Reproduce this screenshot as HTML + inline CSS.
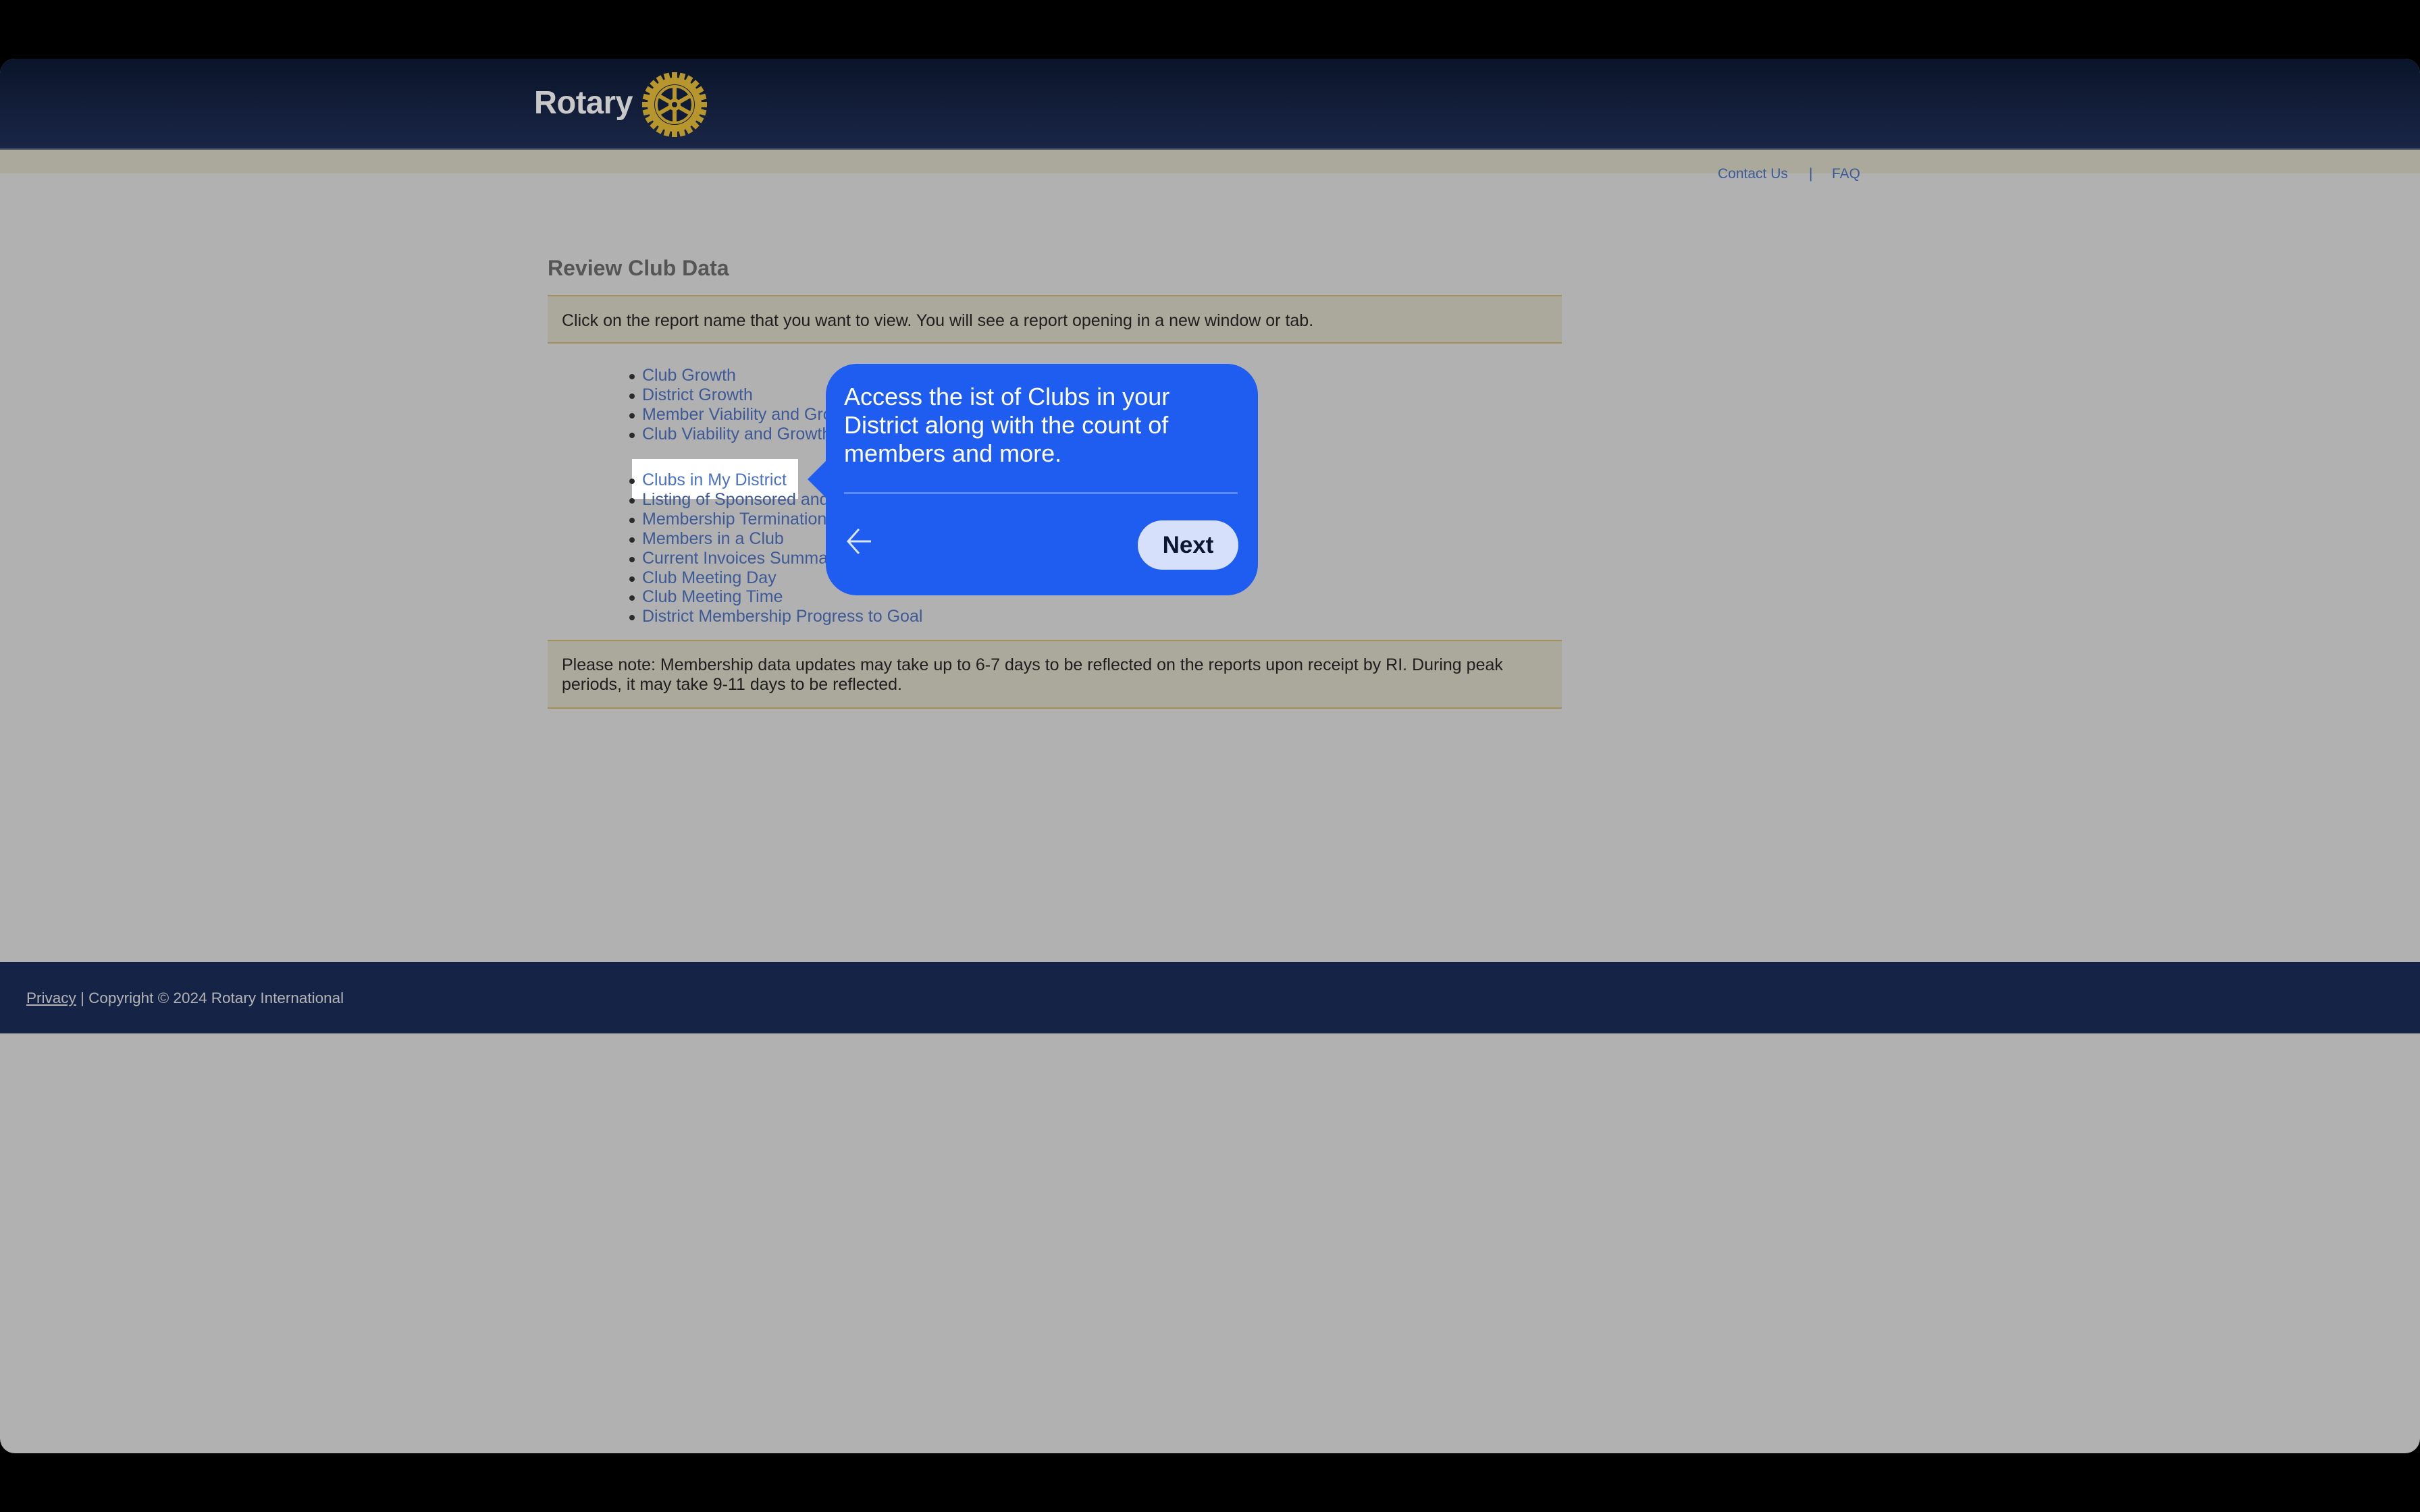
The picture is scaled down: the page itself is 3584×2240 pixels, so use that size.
<!DOCTYPE html>
<html><head><meta charset="utf-8"><style>
*{margin:0;padding:0;box-sizing:border-box}
body{width:3584px;height:2240px;background:#000;position:relative;overflow:hidden;font-family:"Liberation Sans",Arial,sans-serif}
.frame{position:absolute;left:0;top:87px;width:3584px;height:2066px;background:#b1b1b1;border-radius:22px;overflow:hidden}
.hdr{position:absolute;left:0;top:0;width:100%;height:135px;background:linear-gradient(#0a1429,#1a2647);border-bottom:2px solid #5a6070}
.tan{position:absolute;left:0;top:135px;width:100%;height:35px;background:#aaa99b}
.abs{position:absolute}
.lnk{color:#3d5a96}
.list{position:absolute;left:951px;font-size:25px;line-height:28.9px;color:#3d5a96}
.list div{position:relative;white-space:nowrap}
.list div:before{content:"";position:absolute;left:-19px;top:12px;width:8px;height:8px;border-radius:50%;background:#2a2a2a}
.box{position:absolute;left:811px;width:1502px;background:#aaa99b;border-top:2px solid #a38f5a;border-bottom:2px solid #a38f5a;font-size:25px;color:#1e1e1e}
</style></head><body>
<div class="frame">
<div class="hdr"></div>
<div class="tan"></div>
<div class="abs" style="left:791px;top:38px;font-size:48px;font-weight:bold;color:#c8c8c8;letter-spacing:-0.5px;transform:scaleX(0.98);transform-origin:left">Rotary</div>
<svg class="abs" style="left:951px;top:20px" width="96" height="96" viewBox="-48 -48 96 96">
<g fill="#b8962e">
<circle r="40"/>
<g id="t"><rect x="-4" y="-48" width="8" height="10"/></g>
<use href="#t" transform="rotate(15)"/><use href="#t" transform="rotate(30)"/><use href="#t" transform="rotate(45)"/><use href="#t" transform="rotate(60)"/><use href="#t" transform="rotate(75)"/><use href="#t" transform="rotate(90)"/><use href="#t" transform="rotate(105)"/><use href="#t" transform="rotate(120)"/><use href="#t" transform="rotate(135)"/><use href="#t" transform="rotate(150)"/><use href="#t" transform="rotate(165)"/><use href="#t" transform="rotate(180)"/><use href="#t" transform="rotate(195)"/><use href="#t" transform="rotate(210)"/><use href="#t" transform="rotate(225)"/><use href="#t" transform="rotate(240)"/><use href="#t" transform="rotate(255)"/><use href="#t" transform="rotate(270)"/><use href="#t" transform="rotate(285)"/><use href="#t" transform="rotate(300)"/><use href="#t" transform="rotate(315)"/><use href="#t" transform="rotate(330)"/><use href="#t" transform="rotate(345)"/>
</g>
<circle r="30" fill="#101b38"/>
<circle r="27" fill="none" stroke="#b8962e" stroke-width="4"/>
<g stroke="#b8962e" stroke-width="6"><line x1="0" y1="-27" x2="0" y2="27"/><line x1="-23" y1="-13" x2="23" y2="13"/><line x1="-23" y1="13" x2="23" y2="-13"/></g>
<circle r="9" fill="#b8962e"/><circle r="4" fill="#101b38"/>
</svg>
<div class="abs lnk" style="left:2544px;top:159px;font-size:21px">Contact Us</div>
<div class="abs lnk" style="left:2679px;top:159px;font-size:21px">|</div>
<div class="abs lnk" style="left:2713px;top:159px;font-size:21px">FAQ</div>
<div class="abs" style="left:811px;top:292px;font-size:32px;font-weight:bold;color:#555">Review Club Data</div>
<div class="box" style="top:350px;height:72px;padding:22px 0 0 21px">Click on the report name that you want to view. You will see a report opening in a new window or tab.</div>
<div class="list" style="top:455px">
<div>Club Growth</div><div>District Growth</div><div>Member Viability and Growth</div><div>Club Viability and Growth</div>
</div>
<div class="abs" style="left:936px;top:593px;width:246px;height:59px;background:#fff"></div>
<div class="list" style="top:610px">
<div style="color:#4a72c4">Clubs in My District</div><div>Listing of Sponsored and</div><div>Membership Termination</div><div>Members in a Club</div><div>Current Invoices Summary</div><div>Club Meeting Day</div><div>Club Meeting Time</div><div>District Membership Progress to Goal</div>
</div>
<div class="box" style="top:861px;height:102px;padding:21px 0 0 21px;line-height:29px">Please note: Membership data updates may take up to 6-7 days to be reflected on the reports upon receipt by RI. During peak<br>periods, it may take 9-11 days to be reflected.</div>
<div class="abs" style="left:0;top:1338px;width:100%;height:106px;background:#142346"></div>
<div class="abs" style="left:39px;top:1379px;font-size:22.5px;color:#b4b4b4"><u>Privacy</u> | Copyright © 2024 Rotary International</div>
</div>
<svg class="abs" style="left:1194px;top:680px" width="32" height="60"><polygon points="2,30 30,2 30,58" fill="#1f5cf0"/></svg>
<div class="abs" style="left:1223px;top:539px;width:640px;height:343px;background:#1f5cf0;border-radius:46px"></div>
<div class="abs" style="left:1250px;top:567px;font-size:36px;line-height:42px;color:#fff;width:560px">Access the ist of Clubs in your District along with the count of members and more.</div>
<div class="abs" style="left:1250px;top:729px;width:583px;height:3px;background:#5a8af5"></div>
<svg class="abs" style="left:1250px;top:780px" width="50" height="45"><path d="M40 22H6M22 4 6 22 22 40" fill="none" stroke="#dce6ff" stroke-width="3"/></svg>
<div class="abs" style="left:1685px;top:771px;width:149px;height:73px;background:#d6e0fb;border-radius:37px;font-size:35px;font-weight:bold;color:#0d1530;text-align:center;line-height:73px">Next</div>
</body></html>
